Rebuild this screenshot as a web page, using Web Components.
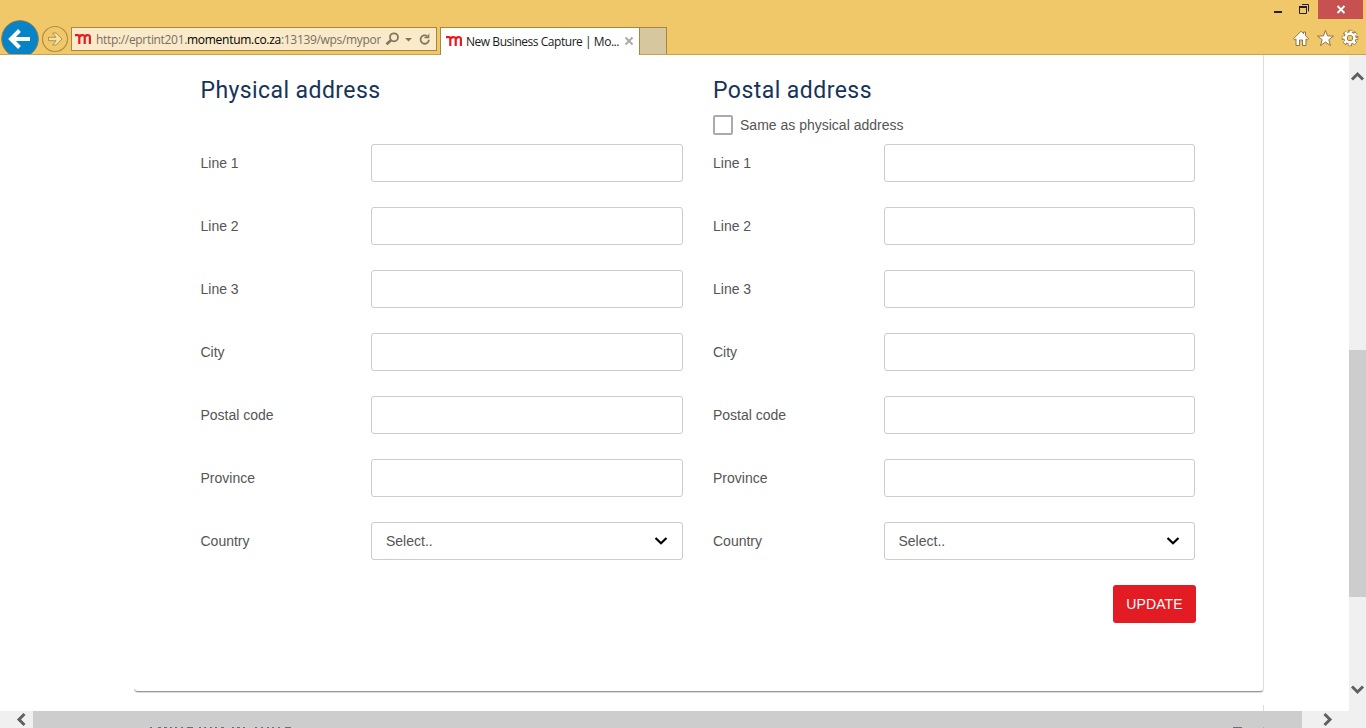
<!DOCTYPE html>
<html lang="en"><head><meta charset="utf-8"><title>New Business Capture</title>
<style>html,body{margin:0;height:728px;overflow:hidden;background:#fff;font-family:"Liberation Sans",Arial,sans-serif}</style></head>
<body><app-window></app-window>
<script>
const define=(name,html,setup)=>customElements.define(name,class extends HTMLElement{
  connectedCallback(){
    if(this.shadowRoot)return;
    const root=this.attachShadow({mode:'open'});
    const t=document.createElement('template');
    t.innerHTML=typeof html==='function'?html(this):html;
    root.append(t.content.cloneNode(true));
    if(setup)setup(this,root);
  }
});

/* Text tracked to occupy a given width */
define('tracked-text','<style>:host{display:block;white-space:pre}span{display:inline-block}</style><span><slot></slot></span>',(el,root)=>{
  const s=root.querySelector('span'),n=el.textContent.length,w=+el.getAttribute('width');
  s.style.letterSpacing=((w-s.getBoundingClientRect().width)/n)+'px';
});

define('brand-mark',`<style>:host{display:block;width:17px;height:12px}svg{display:block}</style>
<svg width="17" height="12" viewBox="0 0 17 12" fill="none" stroke="#e31b23" stroke-width="2.200"><path d="M0 2.100H2.900Q4.300 2.100 4.300 4V11M4.300 4.600C4.900 1.400 9.500 1.200 9.700 4V11M9.700 4.600C10.300 1.400 14.700 1.200 14.900 4V11"/></svg>`);

define('nav-buttons',`<style>:host{display:block;width:71px;height:34px;margin-top:20px}svg{display:block}</style>
<svg width="71" height="34" viewBox="0 20 71 34"><circle cx="20" cy="39" r="18.300" fill="#0684c7" stroke="#7c7b54" stroke-width="1"/>
<path d="M11 39H30M19.500 30.500L11 39l8.500 8.500" fill="none" stroke="#fff" stroke-width="4"/>
<circle cx="55" cy="39" r="12.500" fill="none" stroke="#ac8d49" stroke-width="1.200"/>
<path d="M48.500 37.300H56L52.600 33H56.300L62 39l-5.700 6h-3.700l3.400-4.300H48.500z" fill="#f8dfa8" stroke="#b09450"/></svg>`);

define('address-bar',`<style>:host{display:flex;box-sizing:border-box;width:366px;height:24px;margin-top:27px;border:1px solid #a68641;background:#faeac9;align-items:center;font:12px/20px "Open Sans","Noto Sans",sans-serif;color:#77705f}
brand-mark{margin:-1px 4px 0 3px}.u{display:flex;width:285px;overflow:hidden;margin-top:2px}.d{color:#000}svg{display:block;margin-left:4px}</style>
<brand-mark></brand-mark><div class="u"><tracked-text width="91">http://eprtint201.</tracked-text><tracked-text class="d" width="94">momentum.co.za</tracked-text><tracked-text width="100">:13139/wps/mypor</tracked-text></div>
<svg width="48" height="18" viewBox="0 0 48 18" fill="none" stroke="#807660"><circle cx="9" cy="7.300" r="4" stroke-width="1.800"/><path d="M6 10.200L1.500 14.300" stroke-width="2.600"/><path d="M20 8h7l-3.500 3.500z" fill="#807660" stroke="none"/><path d="M42.300 6.200A4.200 4.200 0 1 0 43.900 9.800" stroke-width="1.800"/><path d="M44.300 3v5.300H39.500V7H42z" fill="#807660" stroke="none"/></svg>`);

define('browser-tabs',`<style>:host{display:flex;height:27px;margin:27px 0 0 3px;box-sizing:border-box;font:12px/26px "Open Sans","Noto Sans",sans-serif;color:#1b1b1b}
.t{display:flex;width:200px;box-sizing:border-box;height:28px;background:#fff;border:1px solid #a68641;border-bottom:0;position:relative}
brand-mark{margin:7px 3px 0 5px}.n{width:27px;height:27px;box-sizing:border-box;background:#d7c79f;border:1px solid #a68641;border-left:0;border-bottom:0}svg{margin:8px 0 0 5px}tracked-text{margin-top:1px}</style>
<div class="t"><brand-mark></brand-mark><tracked-text width="153">New Business Capture | Mo...</tracked-text><svg width="10" height="10" viewBox="0 0 10 10"><path d="M1.500 1.500l7 7m0-7l-7 7" stroke="#aaa" stroke-width="2"/></svg></div><div class="n"></div>`);

define('window-tools',`<style>:host{display:block;margin-left:auto;width:106px;height:54px}svg{display:block}</style>
<svg width="106" height="54" viewBox="1260 0 106 54"><path d="M1274 11h8v2h-8z" fill="#222"/><path d="M1299.500 6.500h7v7h-7zM1302 4.500h6.500v7" fill="none" stroke="#222"/><path d="M1299 6h8v2h-8z" fill="#222"/>
<path d="M1318 0h45v19h-45z" fill="#c75050"/><path d="M1337.500 6l7 7m0-7l-7 7" stroke="#fff" stroke-width="1.900"/>
<g fill="#fff" stroke="#8f753f" stroke-width="1"><path d="M1301 31.200l2.500 2.500v-1.700h2v3.700l3 3-1 1.200-1.500-1v6.600h-3.500v-5.500h-3v5.500h-3.500v-6.600l-1.500 1-1-1.200z"/>
<path d="M1325.500 30.300l2 5.600 6 .2-4.700 3.600 1.700 5.900-5-3.500-5 3.500 1.700-5.900-4.700-3.600 6-.2z"/></g>
<g fill="none"><circle cx="1350" cy="38" r="6.600" stroke="#8f753f" stroke-width="3.400" stroke-dasharray="3.600 1.583" stroke-dashoffset="1.800"/><circle cx="1350" cy="38" r="4.400" stroke="#8f753f" stroke-width="4.200"/><circle cx="1350" cy="38" r="6.300" stroke="#fff" stroke-width="2.600" stroke-dasharray="2.300 2.648" stroke-dashoffset="1.150"/><circle cx="1350" cy="38" r="4.400" stroke="#fff" stroke-width="2.600"/></g></svg>`);

define('browser-chrome',`<style>:host{display:flex;align-items:flex-start;box-sizing:border-box;height:55px;background:#f0c869;border-bottom:1px solid #c4a355}</style>
<nav-buttons></nav-buttons><address-bar></address-bar><browser-tabs></browser-tabs><window-tools></window-tools>`);

define('form-field',el=>`<style>:host{display:flex;height:38px;margin-bottom:25px;align-items:center;font-size:14px;color:#555}
label{width:170.500px;flex:none}.b{flex:1;height:38px;box-sizing:border-box;border:1px solid #ccc;border-radius:3px;display:flex;align-items:center;justify-content:space-between;padding:0 14px}</style>
<label>${el.getAttribute('label')}</label><div class="b">${el.hasAttribute('select')?'<span>Select..</span><svg width="14" height="10" viewBox="0 0 14 10"><path d="M1.500 2l5.500 5.300L12.500 2" fill="none" stroke="#000" stroke-width="2.200"/></svg>':''}</div>`);

define('address-form',el=>`<style>:host{display:block;width:${el.getAttribute('width')}px}
h2{margin:0;height:40px;padding-top:2px;font:400 23px/28px Roboto,sans-serif;color:#163459}
.o{height:27px;display:flex;align-items:flex-start;font-size:14px;line-height:20px;color:#555}</style>
<h2><slot name="title"></slot></h2><div class="o"><slot name="option"></slot></div>
${['Line 1','Line 2','Line 3','City','Postal code','Province'].map(l=>`<form-field label="${l}"></form-field>`).join('')}<form-field label="Country" select></form-field>`);

define('check-option',`<style>:host{display:flex;gap:7px;align-items:center;height:20px;margin-top:-2px}i{width:20px;height:20px;box-sizing:border-box;border:2px solid #aaa;border-radius:2px}</style><i></i><slot></slot>`);

define('action-button',`<style>:host{display:flex;width:83px;height:38px;background:#e31b23;border-radius:3px;color:#fff;font-size:14px;align-items:center;justify-content:center}</style><slot></slot>`);

define('address-card',`<style>:host{display:block;box-sizing:border-box;width:1130px;height:637px;margin-left:134px;padding:20px 67px 0 66.500px;border-right:1px solid #ddd;border-bottom:1px solid #999;border-radius:0 0 4px 4px;box-shadow:0 1px 0 #ddd}
.g{display:flex;gap:30px}action-button{margin-left:auto}</style>
<div class="g"><address-form width="482.500"><tracked-text slot="title" width="180">Physical address</tracked-text></address-form>
<address-form width="482"><tracked-text slot="title" width="159">Postal address</tracked-text><check-option slot="option"><tracked-text width="163.500">Same as physical address</tracked-text></check-option></address-form></div><action-button><tracked-text width="56.500">UPDATE</tracked-text></action-button>`);

define('scroll-column',`<style>:host{display:flex;flex-direction:column;width:17px;height:656px;background:#f0f0f0}svg{display:block}.s{height:295px;flex:none}.thumb{height:247px;background:#cdcdcd;flex:none}.e{flex:1;display:flex;align-items:flex-end}</style>
<div class="s"><svg width="17" height="30" viewBox="0 0 17 30"><path d="M3 24.500l5.500-5.500 5.500 5.500" fill="none" stroke="#606060" stroke-width="3"/></svg></div><div class="thumb"></div><div class="e"><svg width="17" height="35" viewBox="0 0 17 35"><path d="M3 10.500l5.500 5.500 5.500-5.500" fill="none" stroke="#606060" stroke-width="3"/></svg></div>`);

define('scroll-row',()=>{
  const marks=[[150,2],[158,3],[164,3],[170,2],[175,2],[181,2],[187,6],[199,2],[204,2],[210,2],[215,2],[221,3],[232,2],[237,3],[243,2],[255,2],[261,2],[267,2],[272,2],[278,2],[285,6],[1233,9]];
  return `<style>:host{display:flex;height:17px;background:#f0f0f0}svg{display:block;flex:none}.t{background:#cdcdcd}</style>
<svg width="33" height="17"><path d="M24.500 3l-5.500 5.500 5.500 5.500" fill="none" stroke="#606060" stroke-width="3"/></svg>
<svg class="t" width="1269" height="17" viewBox="33 0 1269 17">${marks.map(([x,w])=>`<rect x="${x}" y="16" width="${w}" height="1" fill="#68707e"/>`).join('')}<path d="M1263 16h1v1h-1z" fill="#aaa"/></svg>
<svg width="64" height="17"><path d="M22.500 3l5.500 5.500-5.500 5.500" fill="none" stroke="#606060" stroke-width="3"/></svg>`;});

define('app-window',`<style>:host{display:block;width:1366px;height:728px;overflow:hidden}.v{display:flex;height:656px}.p{width:1349px;height:656px;overflow:hidden}.next{margin:13px 0 0 134px;width:1129px;height:6px;border-right:1px solid #ddd}</style>
<browser-chrome></browser-chrome><div class="v"><div class="p"><address-card></address-card><div class="next"></div></div><scroll-column></scroll-column></div><scroll-row></scroll-row>`);
</script></body></html>
